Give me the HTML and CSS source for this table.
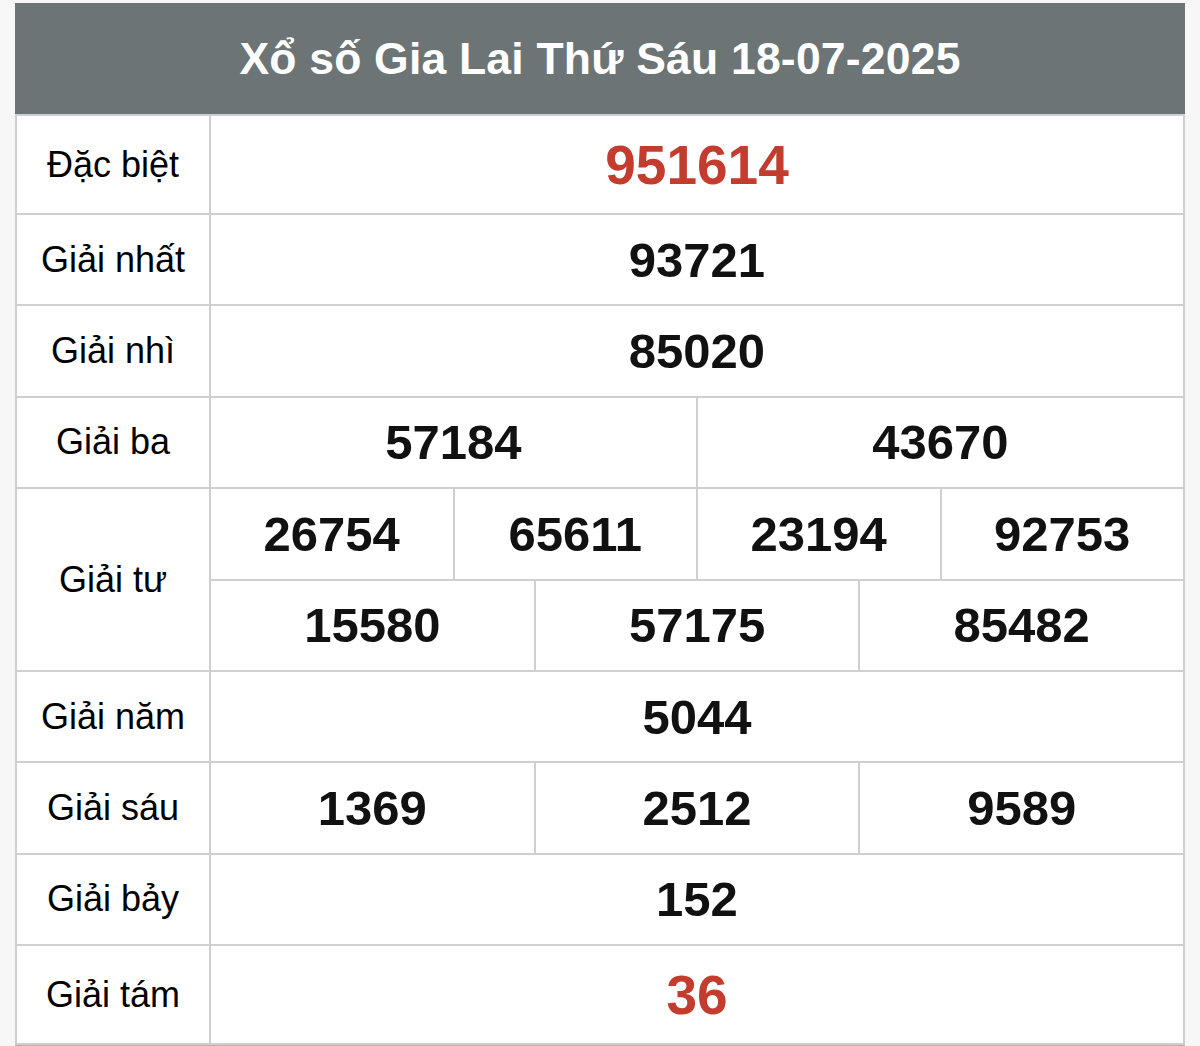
FILE: index.html
```html
<!DOCTYPE html>
<html lang="vi">
<head>
<meta charset="utf-8">
<title>Xổ số Gia Lai</title>
<link rel="stylesheet" href="styles.css">
</head>
<body>
<div class="board">
  <div class="header">Xổ số Gia Lai Thứ Sáu 18-07-2025</div>
  <div class="row tall">
    <div class="label">Đặc biệt</div>
    <div class="values"><div class="cell big red">951614</div></div>
  </div>
  <div class="row">
    <div class="label">Giải nhất</div>
    <div class="values"><div class="cell">93721</div></div>
  </div>
  <div class="row">
    <div class="label">Giải nhì</div>
    <div class="values"><div class="cell">85020</div></div>
  </div>
  <div class="row">
    <div class="label">Giải ba</div>
    <div class="values"><div class="cell">57184</div><div class="cell">43670</div></div>
  </div>
  <div class="row double">
    <div class="label">Giải tư</div>
    <div class="stack">
      <div class="values"><div class="cell">26754</div><div class="cell">65611</div><div class="cell">23194</div><div class="cell">92753</div></div>
      <div class="values sub"><div class="cell">15580</div><div class="cell">57175</div><div class="cell">85482</div></div>
    </div>
  </div>
  <div class="row">
    <div class="label">Giải năm</div>
    <div class="values"><div class="cell">5044</div></div>
  </div>
  <div class="row">
    <div class="label">Giải sáu</div>
    <div class="values"><div class="cell">1369</div><div class="cell">2512</div><div class="cell">9589</div></div>
  </div>
  <div class="row">
    <div class="label">Giải bảy</div>
    <div class="values"><div class="cell">152</div></div>
  </div>
  <div class="row tall">
    <div class="label">Giải tám</div>
    <div class="values"><div class="cell big red">36</div></div>
  </div>
</div>
<div class="edge"></div>
</body>
</html>
```
FILE: styles.css
```css
html, body {
  margin: 0;
  padding: 0;
  background: #f7f7f7;
}
body {
  height: 1046px;
  overflow: hidden;
  font-family: "Liberation Sans", Arial, sans-serif;
}
.board {
  margin: 3px 0 0 15px;
  width: 1170px;
  box-sizing: border-box;
  border-left: 2px solid #cfcfcf;
  border-right: 2px solid #cfcfcf;
  border-bottom: 2px solid #cfcfcf;
  background: #ffffff;
}
.header {
  height: 111px;
  margin: 0 -2px;
  background: #6d7475;
  color: #ffffff;
  font-weight: bold;
  font-size: 44.5px;
  display: flex;
  align-items: center;
  justify-content: center;
  letter-spacing: 0.2px;
}
.row {
  display: flex;
  border-top: 2px solid #cfcfcf;
  height: 89.4px;
}
.row.tall {
  height: 97px;
}
.row.double {
  height: 180.75px;
}
.label {
  width: 192px;
  flex: none;
  border-right: 2px solid #cfcfcf;
  display: flex;
  align-items: center;
  justify-content: center;
  font-size: 36px;
  color: #000;
}
.stack {
  flex: 1;
  display: flex;
  flex-direction: column;
}
.stack .values {
  flex: 1;
}
.values {
  flex: 1;
  display: flex;
}
.values.sub {
  border-top: 2px solid #cfcfcf;
}
.cell {
  flex: 1;
  display: flex;
  align-items: center;
  justify-content: center;
  font-size: 49px;
  font-weight: bold;
  color: #111;
}
.cell + .cell {
  border-left: 2px solid #cfcfcf;
}
.cell.big {
  font-size: 55px;
}
.cell.red {
  color: #c43c2e;
}
.edge {
  margin-left: 15px;
  width: 1170px;
  height: 1px;
  background: #c9ad98;
}
```
